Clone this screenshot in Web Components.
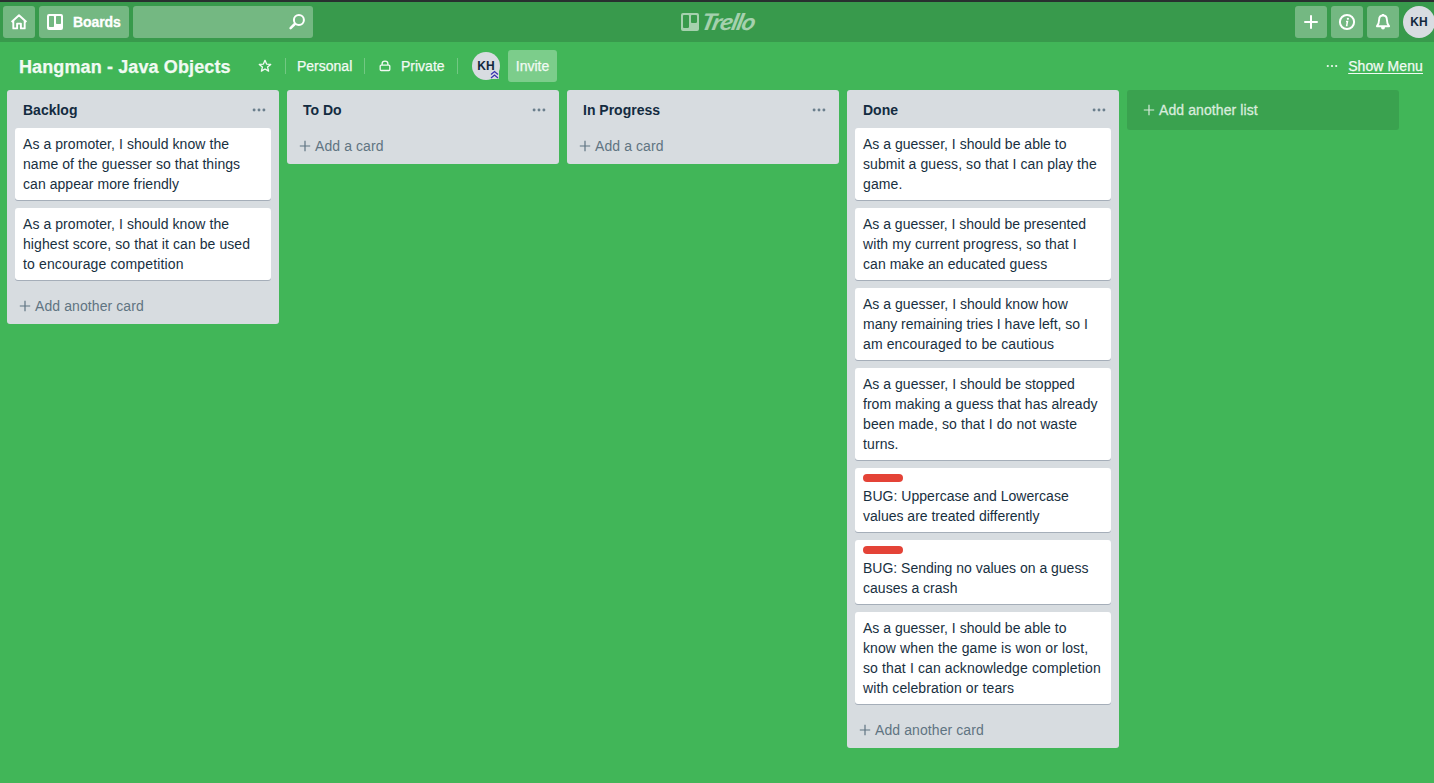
<!DOCTYPE html>
<html lang="en">
<head>
<meta charset="utf-8">
<title>Hangman - Java Objects | Trello</title>
<style>
html,body{margin:0;height:100%;overflow:hidden;background:#41b658}
body{font:14px/20px "Liberation Sans",Arial,sans-serif;color:#18303f}
</style>
</head>
<body>
<trello-app></trello-app>
<script>
const define = (name, html, setup) => {
  const t = document.createElement('template');
  t.innerHTML = html;
  customElements.define(name, class extends HTMLElement {
    constructor() {
      super();
      this.attachShadow({mode: 'open'}).append(t.content.cloneNode(true));
    }
    connectedCallback() { if (setup) setup(this, this.shadowRoot); }
  });
};

const icons = {
  home: '<svg width="18" height="18" viewBox="0 0 18 18" fill="none" stroke="#fff" stroke-width="1.9" stroke-linejoin="round"><path d="M1.6 9 9 2.3 16.4 9M3.3 8v7.4h3.8V10.6h3.8v4.8h3.8V8"/></svg>',
  board: '<svg width="16" height="16" viewBox="0 0 16 16"><path fill="#fff" fill-rule="evenodd" d="M2 0h12a2 2 0 0 1 2 2v12a2 2 0 0 1-2 2H2a2 2 0 0 1-2-2V2a2 2 0 0 1 2-2zM2.7 2a.7.7 0 0 0-.7.7v9.6c0 .4.3.7.7.7h3.6c.4 0 .7-.3.7-.7V2.700a.7.7 0 0 0-.7-.7zM9.700 2a.7.7 0 0 0-.7.7v6.600c0 .4.3.7.7.7h3.600c.4 0 .7-.3.7-.7V2.700a.7.7 0 0 0-.7-.7z"/></svg>',
  logo: '<svg width="18" height="18" viewBox="0 0 18 18"><path fill="#fff" fill-rule="evenodd" d="M2 0h14a2 2 0 0 1 2 2v14a2 2 0 0 1-2 2H2a2 2 0 0 1-2-2V2a2 2 0 0 1 2-2zM2.900 2a.9.9 0 0 0-.9.9v11.200c0 .5.4.9.9.9h4.200c.5 0 .9-.4.900-.9V2.900a.9.9 0 0 0-.9-.9zM10.900 2a.9.9 0 0 0-.9.9v6.200c0 .5.4.9.9.9h4.200c.5 0 .9-.4.900-.9V2.900a.9.9 0 0 0-.9-.9z"/></svg>',
  search: '<svg width="18" height="18" viewBox="0 0 18 18" fill="none" stroke="#fff" stroke-width="2"><circle cx="10.900" cy="6.900" r="5"/><path stroke-width="2.500" stroke-linecap="round" d="m6.800 11-4.200 4.200"/></svg>',
  plus: '<svg width="16" height="16" viewBox="0 0 16 16" stroke="#fff" stroke-width="2" stroke-linecap="round"><path d="M8 2v12M2 8h12"/></svg>',
  info: '<svg width="18" height="18" viewBox="0 0 18 18"><circle cx="9" cy="9" r="7.100" fill="none" stroke="#fff" stroke-width="2"/><circle cx="9.900" cy="5.800" r="1.150" fill="#fff"/><path d="M8 8.400h1.500L8.700 12.400h.9" fill="none" stroke="#fff" stroke-width="1.500"/></svg>',
  bell: '<svg width="18" height="18" viewBox="0 0 18 18"><path d="M9 2.500c-2.700 0-3.900 2-3.900 4.300 0 3.700-.8 4.900-2.200 6.400h12.200c-1.400-1.500-2.200-2.700-2.200-6.400 0-2.300-1.200-4.300-3.900-4.300z" fill="none" stroke="#fff" stroke-width="1.900" stroke-linejoin="round"/><path fill="#fff" d="M7.900 1h2.200v1.500H7.900zM7 14h4a2 2.500 0 0 1-4 0z"/></svg>',
  star: '<svg width="14" height="14" viewBox="0 0 14 14"><path d="m7 1.300 1.600 3.800 4.100.3-3.100 2.700 1 4L7 10l-3.600 2.100 1-4-3.100-2.700 4.100-.3z" fill="none" stroke="#f1faf3" stroke-width="1.300" stroke-linejoin="round"/></svg>',
  lock: '<svg width="12" height="12" viewBox="0 0 12 12" fill="none" stroke="#f1faf3" stroke-width="1.300"><rect x="1.200" y="5.100" width="9.600" height="5.400" rx="1"/><path d="M3.100 5V3.800a2.900 2.600 0 0 1 5.800 0V5"/></svg>',
  add: '<svg width="12" height="12" viewBox="0 0 12 12" stroke="currentColor" stroke-width="1.200"><path d="M6 .8v10.400M.8 6h10.400"/></svg>',
  dots: '<svg width="14" height="4" viewBox="0 0 14 4" fill="currentColor"><circle cx="2.100" cy="2" r="1.450"/><circle cx="7" cy="2" r="1.450"/><circle cx="11.900" cy="2" r="1.450"/></svg>',
  dotsSmall: '<svg width="12" height="4" viewBox="0 0 12 4" fill="#f1faf3"><circle cx="1.800" cy="2" r="1.100"/><circle cx="6" cy="2" r="1.100"/><circle cx="10.200" cy="2" r="1.100"/></svg>',
  admin: '<svg width="9" height="9" viewBox="0 0 9 9"><rect width="9" height="9" rx="1" fill="#d8dce1"/><path d="m1 4.400 3.500-2.900L8 4.400M1 7.900 4.500 5 8 7.900" fill="none" stroke="#3a32b0" stroke-width="1.300"/></svg>'
};

define('ui-icon', '<style>:host{display:block;flex:none;line-height:0}svg{display:block}</style><span></span>',
  (el, root) => { root.querySelector('span').innerHTML = icons[el.getAttribute('name')]; });

define('nav-button', `<style>
:host{display:flex;flex:none;box-sizing:border-box;width:32px;height:32px;border-radius:3px;background:#74b882;align-items:center;justify-content:center;color:#fff;font-weight:bold}
</style><slot></slot>`);

define('user-avatar', `<style>
:host{display:flex;flex:none;position:relative;align-items:center;justify-content:center;width:var(--size,32px);height:var(--size,32px);border-radius:50%;background:#d8dce1;color:#13283d;font:bold 12px/32px "Liberation Sans",Arial,sans-serif}
::slotted(ui-icon){position:absolute;right:1px;bottom:1px}
</style><slot></slot>`);

define('trello-logo', `<style>
:host{display:flex;align-items:center;gap:3px;width:84px;height:26px;padding-left:6px;box-sizing:border-box;opacity:.55;color:#fff}
span{font:italic 700 23px/26px Lato,"Liberation Sans",sans-serif;letter-spacing:-1px;transform:skewX(-14deg) scaleX(1.13);transform-origin:0 50%;margin-top:-2px}
</style><ui-icon name="logo"></ui-icon><span>Trello</span>`);

define('top-bar', `<style>
:host{display:grid;grid-template-columns:1fr 84px 1fr;align-items:center;box-sizing:border-box;height:42px;border-top:2px solid #28302f;background:#389a4c}
div{display:flex;gap:4px;padding-left:3px}
.right{justify-content:flex-end;padding:0}
.boards{width:90px;justify-content:flex-start;padding-left:8px;gap:10px;font-size:14px;letter-spacing:-.1px;-webkit-text-stroke:.3px #fff}
.search{width:180px;justify-content:flex-end;padding-right:7px}
</style>
<div><nav-button><ui-icon name="home"></ui-icon></nav-button>
<nav-button class="boards"><ui-icon name="board"></ui-icon><span>Boards</span></nav-button>
<nav-button class="search"><ui-icon name="search"></ui-icon></nav-button></div>
<trello-logo></trello-logo>
<div class="right"><nav-button><ui-icon name="plus"></ui-icon></nav-button><nav-button><ui-icon name="info"></ui-icon></nav-button><nav-button><ui-icon name="bell"></ui-icon></nav-button><user-avatar style="margin-right:-1px">KH</user-avatar></div>`);

define('board-bar', `<style>
:host{display:flex;align-items:center;height:48px;padding:0 11px 0 19px;box-sizing:border-box;color:#f1faf3;-webkit-text-stroke:.25px #f1faf3}
h1{font-size:18px;line-height:24px;margin:2px 0 0;width:212px;white-space:nowrap;letter-spacing:.12px}
i{width:1px;height:16px;background:#72c883;flex:none}
.star{margin:0 13px 0 27px}
.personal{width:55px;margin:0 12px 0 11px;white-space:nowrap}
.lock{margin:0 10px 0 14px}
.private{width:44px;margin-right:12px;white-space:nowrap}
user-avatar{--size:28px;margin:0 8px 0 14px;-webkit-text-stroke:0}
.invite{width:49px;height:32px;line-height:32px;text-align:center;border-radius:3px;background:#7ccd8b}
.menu{display:flex;align-items:center;gap:10px;margin-left:auto}
u{text-underline-offset:2px;white-space:nowrap;letter-spacing:.1px}
</style>
<h1>Hangman - Java Objects</h1><ui-icon class="star" name="star"></ui-icon><i></i><span class="personal">Personal</span><i></i>
<ui-icon class="lock" name="lock"></ui-icon><span class="private">Private</span><i></i>
<user-avatar>KH<ui-icon name="admin"></ui-icon></user-avatar><span class="invite">Invite</span>
<div class="menu"><ui-icon name="dotsSmall"></ui-icon><u>Show Menu</u></div>`);

define('board-card', `<style>
:host{display:block;box-sizing:border-box;width:256px;padding:6px 8px;margin-bottom:8px;border-radius:3px;background:#fff;box-shadow:0 1px 0 #a5aeb9;white-space:nowrap}
b{display:none;width:40px;height:8px;border-radius:4px;background:#e44337;margin-bottom:4px}
:host([label]) b{display:block}
</style><b></b><slot></slot>`);

define('card-line', `<style>:host{display:block;height:20px;letter-spacing:var(--track,.1px)}</style><slot></slot>`,
  el => { if (el.hasAttribute('track')) el.style.setProperty('--track', el.getAttribute('track') + 'px'); });

define('board-list', `<style>
:host{display:block;flex:none;box-sizing:border-box;width:272px;padding:0 8px;border-radius:3px;background:#d7dce0}
header{display:flex;align-items:center;justify-content:space-between;height:38px;padding:2px 5px 0 8px;box-sizing:border-box;font-weight:bold;color:#132b40}
header ui-icon{color:#6b7f8d}
footer{display:flex;align-items:center;gap:4px;height:36px;padding-left:4px;color:#5f7482;letter-spacing:.09px}
</style>
<header><span></span><ui-icon name="dots"></ui-icon></header><slot></slot>
<footer><ui-icon name="add"></ui-icon><span></span></footer>`,
  (el, root) => {
    root.querySelector('header span').textContent = el.getAttribute('heading');
    root.querySelector('footer span').textContent = el.getAttribute('action');
  });

define('add-list', `<style>
:host{display:flex;flex:none;align-items:center;gap:4px;box-sizing:border-box;width:272px;height:40px;padding-left:16px;border-radius:3px;background:#3aa24f;color:#d8ecdc;letter-spacing:.09px;-webkit-text-stroke:.3px #d8ecdc}
</style><ui-icon name="add"></ui-icon><span><slot></slot></span>`);

/* Each line is [text, letter spacing in px]. */
const card = (lines, label) => `<board-card${label ? ' label' : ''}>` +
  lines.map(([l, t = .1]) => `<card-line track="${t}">${l}</card-line>`).join('') + '</board-card>';

define('trello-app', `<style>
:host{display:block;width:1434px;height:783px;overflow:hidden;background:#41b658}
main{display:flex;align-items:flex-start;gap:8px;padding-left:7px}
</style>
<top-bar></top-bar><board-bar></board-bar>
<main>
<board-list heading="Backlog" action="Add another card">
${card([['As a promoter, I should know the',.07],['name of the guesser so that things',.07],['can appear more friendly',.05]])}
${card([['As a promoter, I should know the',.07],['highest score, so that it can be used',.08],['to encourage competition',.14]])}
</board-list>
<board-list heading="To Do" action="Add a card"></board-list>
<board-list heading="In Progress" action="Add a card"></board-list>
<board-list heading="Done" action="Add another card">
${card([['As a guesser, I should be able to',.01],['submit a guess, so that I can play the',.07],['game.']])}
${card([['As a guesser, I should be presented',-.01],['with my current progress, so that I',.08],['can make an educated guess',.05]])}
${card([['As a guesser, I should know how',.03],['many remaining tries I have left, so I',0],['am encouraged to be cautious']])}
${card([['As a guesser, I should be stopped',.03],['from making a guess that has already',.03],['been made, so that I do not waste'],['turns.']])}
${card([['BUG: Uppercase and Lowercase',.04],['values are treated differently',0]], true)}
${card([['BUG: Sending no values on a guess',-.01],['causes a crash',.02]], true)}
${card([['As a guesser, I should be able to',.01],['know when the game is won or lost,'],['so that I can acknowledge completion',.12],['with celebration or tears']])}
</board-list>
<add-list>Add another list</add-list>
</main>`);
</script>
</body>
</html>
